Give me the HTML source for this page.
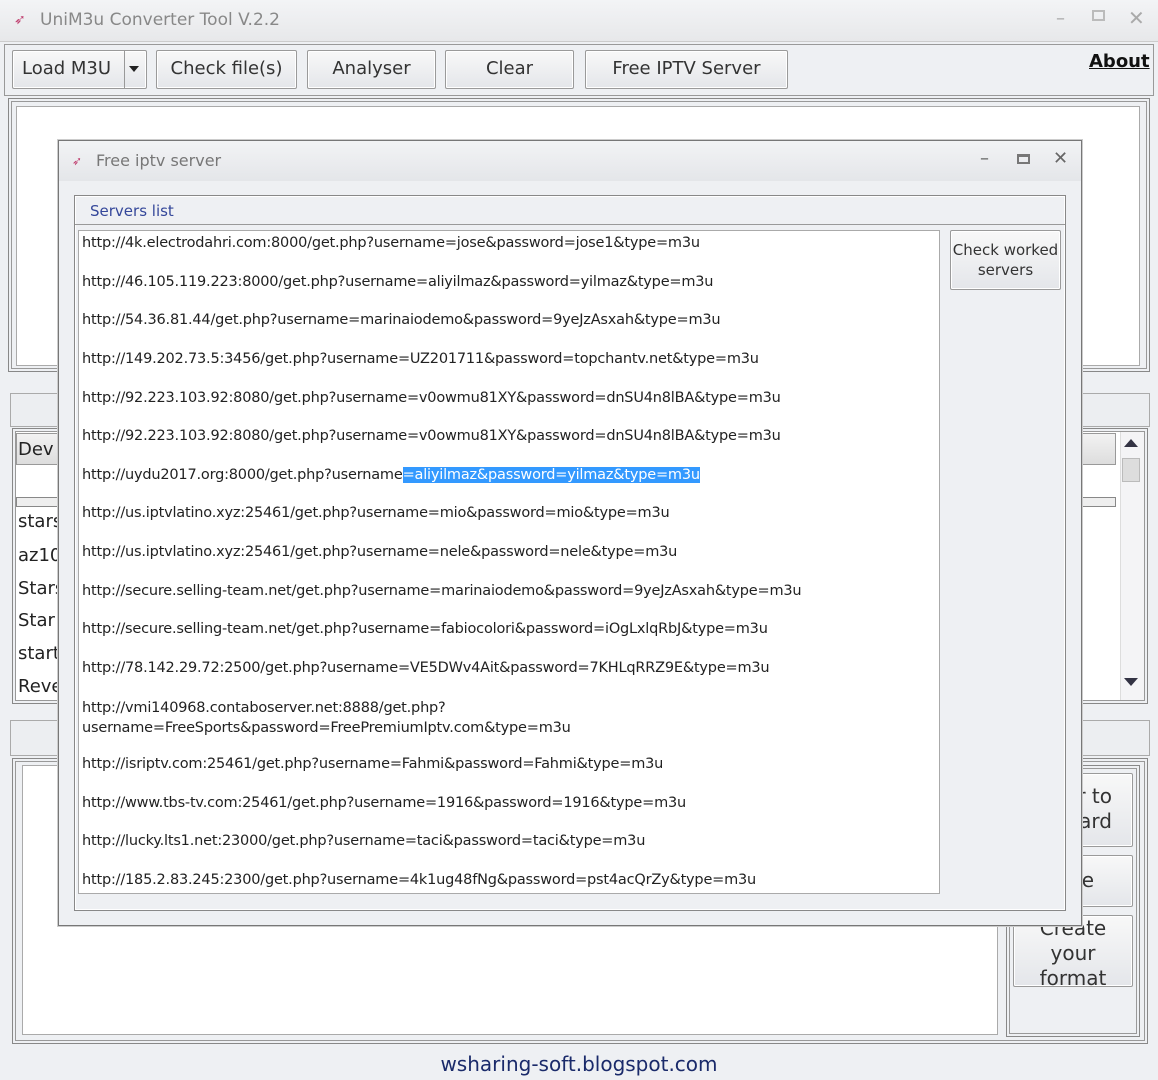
<!DOCTYPE html>
<html><head><meta charset="utf-8"><style>
*{box-sizing:border-box;margin:0;padding:0}
body{width:1158px;height:1080px;background:#eef0f3;font-family:"DejaVu Sans","Liberation Sans",sans-serif;position:relative;overflow:hidden;color:#222}
.a{position:absolute}
.btn{position:absolute;border:1px solid #9a9a9a;border-radius:2px;background:linear-gradient(#f8f8f8,#e4e6ea);font-size:18px;text-align:center;color:#333;box-shadow:inset 0 0 0 1px #fff}
.box{position:absolute;border:1px solid #888;box-shadow:inset 0 0 0 2px #eef0f3,inset 0 0 0 3px #999}
.ln{position:absolute;left:82px;font-size:14.5px;color:#222;white-space:nowrap;letter-spacing:-0.2px}
.lt{position:absolute;left:18px;font-size:18px;color:#222}
</style></head><body>
<!-- title bar -->
<div class="a" style="left:0;top:0;width:1158px;height:42px;background:linear-gradient(#f3f4f6,#e7e8ea);border-bottom:1px solid #ccc"></div>
<div class="a" style="left:14px;top:12px;color:#c04070;font-size:14px">➶</div>
<div class="a" style="left:40px;top:10px;font-size:17px;color:#888">UniM3u Converter Tool V.2.2</div>
<div class="a" style="left:1056px;top:8px;font-size:18px;color:#aaa">–</div>
<div class="a" style="left:1092px;top:10px;width:13px;height:11px;border:2px solid #bbb"></div>
<div class="a" style="left:1128px;top:6px;font-size:20px;color:#aaa">✕</div>
<!-- toolbar -->
<div class="a" style="left:4px;top:44px;width:1150px;height:52px;border:1px solid #999"></div>
<div class="btn" style="left:12px;top:50px;width:135px;height:39px;line-height:36px;text-align:left;padding-left:9px">Load M3U</div>
<div class="a" style="left:124px;top:51px;width:1px;height:37px;background:#999"></div>
<div class="a" style="left:129px;top:66px;border-left:5px solid transparent;border-right:5px solid transparent;border-top:6px solid #222"></div>
<div class="btn" style="left:156px;top:50px;width:141px;height:39px;line-height:36px">Check file(s)</div>
<div class="btn" style="left:307px;top:50px;width:129px;height:39px;line-height:36px">Analyser</div>
<div class="btn" style="left:445px;top:50px;width:129px;height:39px;line-height:36px">Clear</div>
<div class="btn" style="left:585px;top:50px;width:203px;height:39px;line-height:36px">Free IPTV Server</div>
<div class="a" style="left:1089px;top:51px;font-size:18px;font-weight:bold;text-decoration:underline;color:#111">About</div>
<!-- top panel -->
<div class="box" style="left:8px;top:98px;width:1142px;height:274px"></div>
<div class="a" style="left:16px;top:106px;width:1124px;height:260px;background:#fff;border:1px solid #aaa"></div>
<!-- mid -->
<div class="a" style="left:10px;top:393px;width:1140px;height:34px;border:1px solid #aaa;background:#eceef1"></div>
<div class="box" style="left:12px;top:428px;width:1136px;height:276px;background:#fff"></div>
<div class="a" style="left:16px;top:433px;width:1100px;height:32px;border:1px solid #999;background:linear-gradient(#f2f2f2,#ddd)"></div>
<div class="lt" style="top:439px">Dev</div>
<div class="a" style="left:16px;top:497px;width:1100px;height:10px;border:1px solid #888;background:#eee"></div>
<div class="a" style="left:1120px;top:432px;width:24px;height:268px;background:#f4f4f6;border-left:1px solid #ddd"></div>
<div class="a" style="left:1124px;top:439px;border-left:7px solid transparent;border-right:7px solid transparent;border-bottom:8px solid #334"></div>
<div class="a" style="left:1122px;top:458px;width:18px;height:24px;border:1px solid #bbb;background:#ddd"></div>
<div class="a" style="left:1124px;top:678px;border-left:7px solid transparent;border-right:7px solid transparent;border-top:8px solid #334"></div>
<div class="lt" style="top:511px">stars</div>
<div class="lt" style="top:545px">az10</div>
<div class="lt" style="top:578px">Stars</div>
<div class="lt" style="top:610px">Star</div>
<div class="lt" style="top:643px">start</div>
<div class="lt" style="top:676px">Reve</div>
<!-- bottom -->
<div class="a" style="left:10px;top:720px;width:1140px;height:36px;border:1px solid #aaa;background:#eceef1"></div>
<div class="box" style="left:12px;top:758px;width:1136px;height:286px"></div>
<div class="a" style="left:22px;top:765px;width:976px;height:270px;background:#fff;border:1px solid #aaa"></div>
<div class="box" style="left:1006px;top:765px;width:134px;height:272px"></div>
<div class="btn" style="left:1013px;top:773px;width:120px;height:74px;font-size:20px;line-height:25px;padding-top:10px;text-align:right;padding-right:20px">r to<br>oard</div>
<div class="btn" style="left:1013px;top:855px;width:120px;height:52px;font-size:20px;line-height:48px;text-align:right;padding-right:38px">e</div>
<div class="btn" style="left:1013px;top:915px;width:120px;height:72px;font-size:20px;line-height:25px;padding-top:0">Create<br>your<br>format</div>
<div class="a" style="left:0;top:1052px;width:1158px;text-align:center;font-size:20px;color:#1a2a6a">wsharing-soft.blogspot.com</div>
<!-- dialog -->
<div class="a" style="left:58px;top:140px;width:1024px;height:786px;background:#eef0f3;border:1px solid #777;box-shadow:0 0 0 1px #ccc"></div>
<div class="a" style="left:59px;top:141px;width:1022px;height:40px;background:linear-gradient(#f2f3f5,#e4e6e9)"></div>
<div class="a" style="left:72px;top:154px;color:#c04070;font-size:12px">➶</div>
<div class="a" style="left:96px;top:151px;font-size:16px;color:#777">Free iptv server</div>
<div class="a" style="left:980px;top:148px;font-size:18px;color:#666">–</div>
<div class="a" style="left:1017px;top:154px;width:13px;height:10px;border:2px solid #777;border-top-width:3px"></div>
<div class="a" style="left:1053px;top:148px;font-size:18px;color:#666">✕</div>
<div class="a" style="left:74px;top:195px;width:992px;height:716px;border:1px solid #888;box-shadow:inset 0 0 0 1px #fff"></div>
<div class="a" style="left:90px;top:202px;font-size:15px;color:#34479a">Servers list</div>
<div class="a" style="left:75px;top:224px;width:990px;height:1px;background:#999"></div>
<div class="a" style="left:78px;top:230px;width:862px;height:664px;background:#fff;border:1px solid #aaa"></div>
<div class="btn" style="left:950px;top:230px;width:111px;height:60px;font-size:15px;line-height:20px;padding-top:9px">Check worked<br>servers</div>
<div class="ln" style="top:235px">http://4k.electrodahri.com:8000/get.php?username=jose&amp;password=jose1&amp;type=m3u</div>
<div class="ln" style="top:274px">http://46.105.119.223:8000/get.php?username=aliyilmaz&amp;password=yilmaz&amp;type=m3u</div>
<div class="ln" style="top:312px">http://54.36.81.44/get.php?username=marinaiodemo&amp;password=9yeJzAsxah&amp;type=m3u</div>
<div class="ln" style="top:351px">http://149.202.73.5:3456/get.php?username=UZ201711&amp;password=topchantv.net&amp;type=m3u</div>
<div class="ln" style="top:390px">http://92.223.103.92:8080/get.php?username=v0owmu81XY&amp;password=dnSU4n8lBA&amp;type=m3u</div>
<div class="ln" style="top:428px">http://92.223.103.92:8080/get.php?username=v0owmu81XY&amp;password=dnSU4n8lBA&amp;type=m3u</div>
<div class="ln" style="top:467px">http://uydu2017.org:8000/get.php?username<span style="background:#3399ff;color:#fff">=aliyilmaz&amp;password=yilmaz&amp;type=m3u</span></div>
<div class="ln" style="top:505px">http://us.iptvlatino.xyz:25461/get.php?username=mio&amp;password=mio&amp;type=m3u</div>
<div class="ln" style="top:544px">http://us.iptvlatino.xyz:25461/get.php?username=nele&amp;password=nele&amp;type=m3u</div>
<div class="ln" style="top:583px">http://secure.selling-team.net/get.php?username=marinaiodemo&amp;password=9yeJzAsxah&amp;type=m3u</div>
<div class="ln" style="top:621px">http://secure.selling-team.net/get.php?username=fabiocolori&amp;password=iOgLxlqRbJ&amp;type=m3u</div>
<div class="ln" style="top:660px">http://78.142.29.72:2500/get.php?username=VE5DWv4Ait&amp;password=7KHLqRRZ9E&amp;type=m3u</div>
<div class="ln" style="top:698px;line-height:20px">http://vmi140968.contaboserver.net:8888/get.php?<br>username=FreeSports&amp;password=FreePremiumIptv.com&amp;type=m3u</div>
<div class="ln" style="top:756px">http://isriptv.com:25461/get.php?username=Fahmi&amp;password=Fahmi&amp;type=m3u</div>
<div class="ln" style="top:795px">http://www.tbs-tv.com:25461/get.php?username=1916&amp;password=1916&amp;type=m3u</div>
<div class="ln" style="top:833px">http://lucky.lts1.net:23000/get.php?username=taci&amp;password=taci&amp;type=m3u</div>
<div class="ln" style="top:872px">http://185.2.83.245:2300/get.php?username=4k1ug48fNg&amp;password=pst4acQrZy&amp;type=m3u</div>
</body></html>
